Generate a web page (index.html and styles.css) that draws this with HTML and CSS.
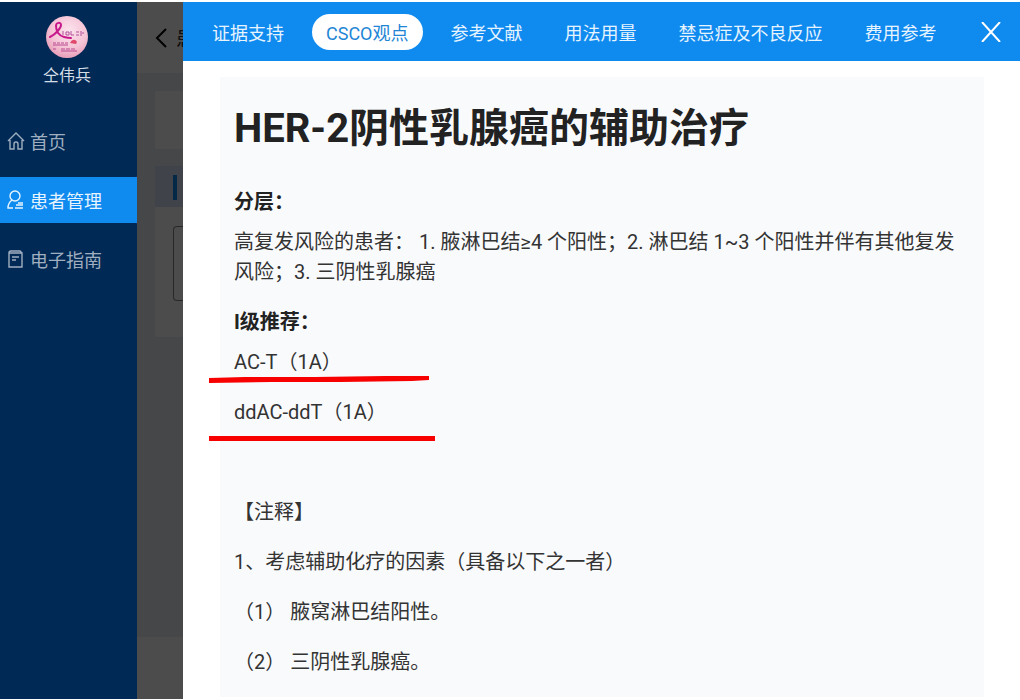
FILE: index.html
```
<!DOCTYPE html>
<html lang="zh-CN">
<head>
    <meta charset="UTF-8">
    <meta name="viewport" content="width=device-width, initial-scale=1.0">
    <title>患者管理</title>
    <link rel="stylesheet" href="styles.css">
</head>
<body>
    <div class="app">
        <!-- Sidebar -->
        <aside class="sidebar">
            <div class="profile">
                <svg class="avatar" viewBox="0 0 42 42" aria-hidden="true">
                    <defs>
                        <radialGradient id="pink" cx="55%" cy="35%" r="70%">
                            <stop offset="0" stop-color="#fbe3ec"/>
                            <stop offset="0.6" stop-color="#f5c3d6"/>
                            <stop offset="1" stop-color="#e597b4"/>
                        </radialGradient>
                    </defs>
                    <circle cx="21" cy="21" r="21" fill="url(#pink)"/>
                    <path d="M4 21C10 18 15 12 15 9C15 6 10 6 10 10C10 15 13 20 18 21Q22 22 25 22" fill="none" stroke="#c8198c" stroke-width="2" stroke-linecap="round"/>
                    <path d="M17 15v4M20 16h3v3h-3zM25 15v4h3M30 16h3M30 19h3M35 15v5M36 17h2" fill="none" stroke="#b34f9c" stroke-width="1"/>
                    <path d="M7 27h3M11 27h3M15 27h3M19 27h3M7 29h15M15 33h4M20 33h4M25 33h4M15 35h16M7 33h3" fill="none" stroke="#b9498f" stroke-width="1"/>
                    <path d="M24 27q2-4 5-3q3 1 1 4z" fill="#e0486c"/>
                </svg>
                <div class="profile-name">仝伟兵</div>
            </div>
            <nav class="menu">
                <a href="#" class="menu-item">
                    <svg class="icon" viewBox="0 0 18 20">
                        <path d="M1 10L9 2l8 8M3 9v9h4v-5q0-2 2-2t2 2v5h4V9"/>
                    </svg>
                    首页
                </a>
                <a href="#" class="menu-item active">
                    <svg class="icon" viewBox="0 0 18 20">
                        <circle cx="8" cy="6" r="5"/>
                        <path d="M5 10Q1 13 1 18H6M11 13h5M9 15h7M8 18h8"/>
                    </svg>
                    患者管理
                </a>
                <a href="#" class="menu-item">
                    <svg class="icon" viewBox="0 0 18 20">
                        <path d="M2 4v14h13V4zM2 4q0-2 2-2h9l2 2M5 8h7M5 11h4"/>
                    </svg>
                    电子指南
                </a>
            </nav>
        </aside>

        <!-- Patient page, dimmed while the drawer is open -->
        <main class="page">
            <div class="page-header">
                <svg class="back" viewBox="0 0 12 20"><path d="M11 1L2 10l9 9"/></svg>
                <span>患</span>
            </div>
            <div class="page-body">
                <div class="card card-empty"></div>
                <div class="card">
                    <div class="card-head"></div>
                    <div class="card-box"></div>
                </div>
            </div>
            <div class="page-footer"></div>
            <div class="mask"></div>
        </main>

        <!-- Drawer -->
        <section class="drawer">
            <header class="drawer-header">
                <div class="tabs">
                    <button type="button" class="tab">证据支持</button>
                    <button type="button" class="tab active">CSCO观点</button>
                    <button type="button" class="tab">参考文献</button>
                    <button type="button" class="tab">用法用量</button>
                    <button type="button" class="tab">禁忌症及不良反应</button>
                    <button type="button" class="tab">费用参考</button>
                </div>
                <button type="button" class="close" aria-label="关闭">
                    <svg viewBox="0 0 20 20"><path d="M1 0l18 20M19 0L1 20"/></svg>
                </button>
            </header>
            <article class="content">
                <h1>HER-2阴性乳腺癌的辅助治疗</h1>
                <h2>分层：</h2>
                <p>高复发风险的患者： 1. 腋淋巴结≥4 个阳性；2. 淋巴结 1~3 个阳性并伴有其他复发风险；3. 三阴性乳腺癌</p>
                <h2>I级推荐：</h2>
                <p class="marked">
                    AC-T（1A）
                    <svg class="mark" viewBox="0 0 226 8"><path d="M0 2L36 1L106 1L176 0H220V4L203 5L132 6L62 6L0 7Z"/></svg>
                </p>
                <p class="marked">
                    ddAC-ddT（1A）
                    <svg class="mark mark-low" viewBox="0 0 226 8"><path d="M0 0H226V5H0Z"/></svg>
                </p>
                <p>&nbsp;</p>
                <p>【注释】</p>
                <p>1、考虑辅助化疗的因素（具备以下之一者）</p>
                <p>（1） 腋窝淋巴结阳性。</p>
                <p>（2） 三阴性乳腺癌。</p>
            </article>
        </section>
    </div>
</body>
</html>
```
FILE: styles.css
```
* {
    box-sizing: border-box;
}
body {
    margin: 0;
    background-color: #fff;
    font-family: Roboto, "Noto Sans CJK SC", sans-serif;
    color: #333;
}
button {
    border: none;
    background: none;
    font-family: inherit;
    cursor: pointer;
}
.app {
    display: flex;
    height: 100vh;
    padding: 2px 0 1px;
}

/* Sidebar */
.sidebar {
    flex: 0 0 137px;
    background-color: #002955;
}
.profile {
    display: flex;
    flex-direction: column;
    align-items: center;
    padding: 14px 3px 0 0;
}
.avatar {
    width: 42px;
    height: 42px;
}
.profile-name {
    margin-top: 6px;
    font-size: 16px;
    line-height: 24px;
    color: #d5dde6;
}
.menu {
    display: flex;
    flex-direction: column;
    gap: 13px;
    margin-top: 30px;
}
.menu-item {
    display: flex;
    align-items: center;
    gap: 5px;
    height: 46px;
    padding-left: 7px;
    font-size: 18px;
    color: #a0afc0;
    text-decoration: none;
}
.menu-item.active {
    background-color: #0f8aef;
    color: #e6f4ff;
}
.icon {
    width: 18px;
    height: 20px;
    fill: none;
    stroke: currentColor;
    stroke-width: 1.4;
}

/* Page beside the drawer */
.page {
    position: relative;
    display: flex;
    flex: 0 0 46px;
    flex-direction: column;
    overflow: hidden;
    background-color: #ebedf5;
}
.page-header {
    display: flex;
    align-items: center;
    gap: 9px;
    height: 71px;
    padding-left: 18px;
    background-color: #fff;
    font-size: 20px;
}
.back {
    flex: none;
    width: 12px;
    height: 20px;
    fill: none;
    stroke: #000;
    stroke-width: 2;
}
.page-body {
    flex: 1;
    padding: 18px 0 0 18px;
}
.card {
    height: 171px;
    margin-bottom: 17px;
    background-color: #fff;
}
.card-empty {
    height: 58px;
}
.card-head {
    height: 41px;
    padding: 9px 18px;
    background-color: #d7e0f5;
}
.card-head::before {
    content: "";
    display: block;
    width: 4px;
    height: 25px;
    background-color: #0f8aef;
}
.card-box {
    height: 75px;
    margin: 19px 0 0 18px;
    border: 1px solid #888;
    border-right: none;
    border-radius: 4px 0 0 4px;
}
.page-footer {
    height: 62px;
    background-color: #fff;
}
.mask {
    position: absolute;
    inset: 0;
    background-color: rgba(0, 0, 0, 0.7);
}

/* Drawer */
.drawer {
    flex: 1;
    min-width: 0;
    overflow: hidden;
    background-color: #fff;
}
.drawer-header {
    display: flex;
    align-items: center;
    justify-content: space-between;
    height: 59px;
    padding: 0 19px 0 15px;
    background-color: #0f8aef;
}
.tabs {
    display: flex;
    gap: 14px;
}
.tab {
    height: 36px;
    padding: 0 14px;
    border-radius: 18px;
    font-size: 18px;
    color: #e6f4ff;
    white-space: nowrap;
}
.tab.active {
    background-color: #fff;
    color: #1f86d6;
}
.close {
    display: flex;
    padding: 0;
}
.close svg {
    width: 20px;
    height: 20px;
    fill: none;
    stroke: #fff;
    stroke-width: 2;
}
.content {
    margin: 16px 36px 0 37px;
    padding: 22px 14px 0;
    background-color: #f9fafc;
    font-size: 20px;
    line-height: 30px;
}
.content h1 {
    margin: 0 0 28px;
    font-size: 40px;
    line-height: 60px;
    color: #222;
}
.content h2 {
    margin: 0 0 10px;
    font-size: 20px;
    color: #222;
}
.content p {
    margin: 0;
    padding-bottom: 20px;
}
.marked {
    position: relative;
}
.mark {
    position: absolute;
    left: -25px;
    top: 29px;
    width: 226px;
    height: 8px;
    fill: #f80000;
}
.mark-low {
    top: 39px;
}
```
